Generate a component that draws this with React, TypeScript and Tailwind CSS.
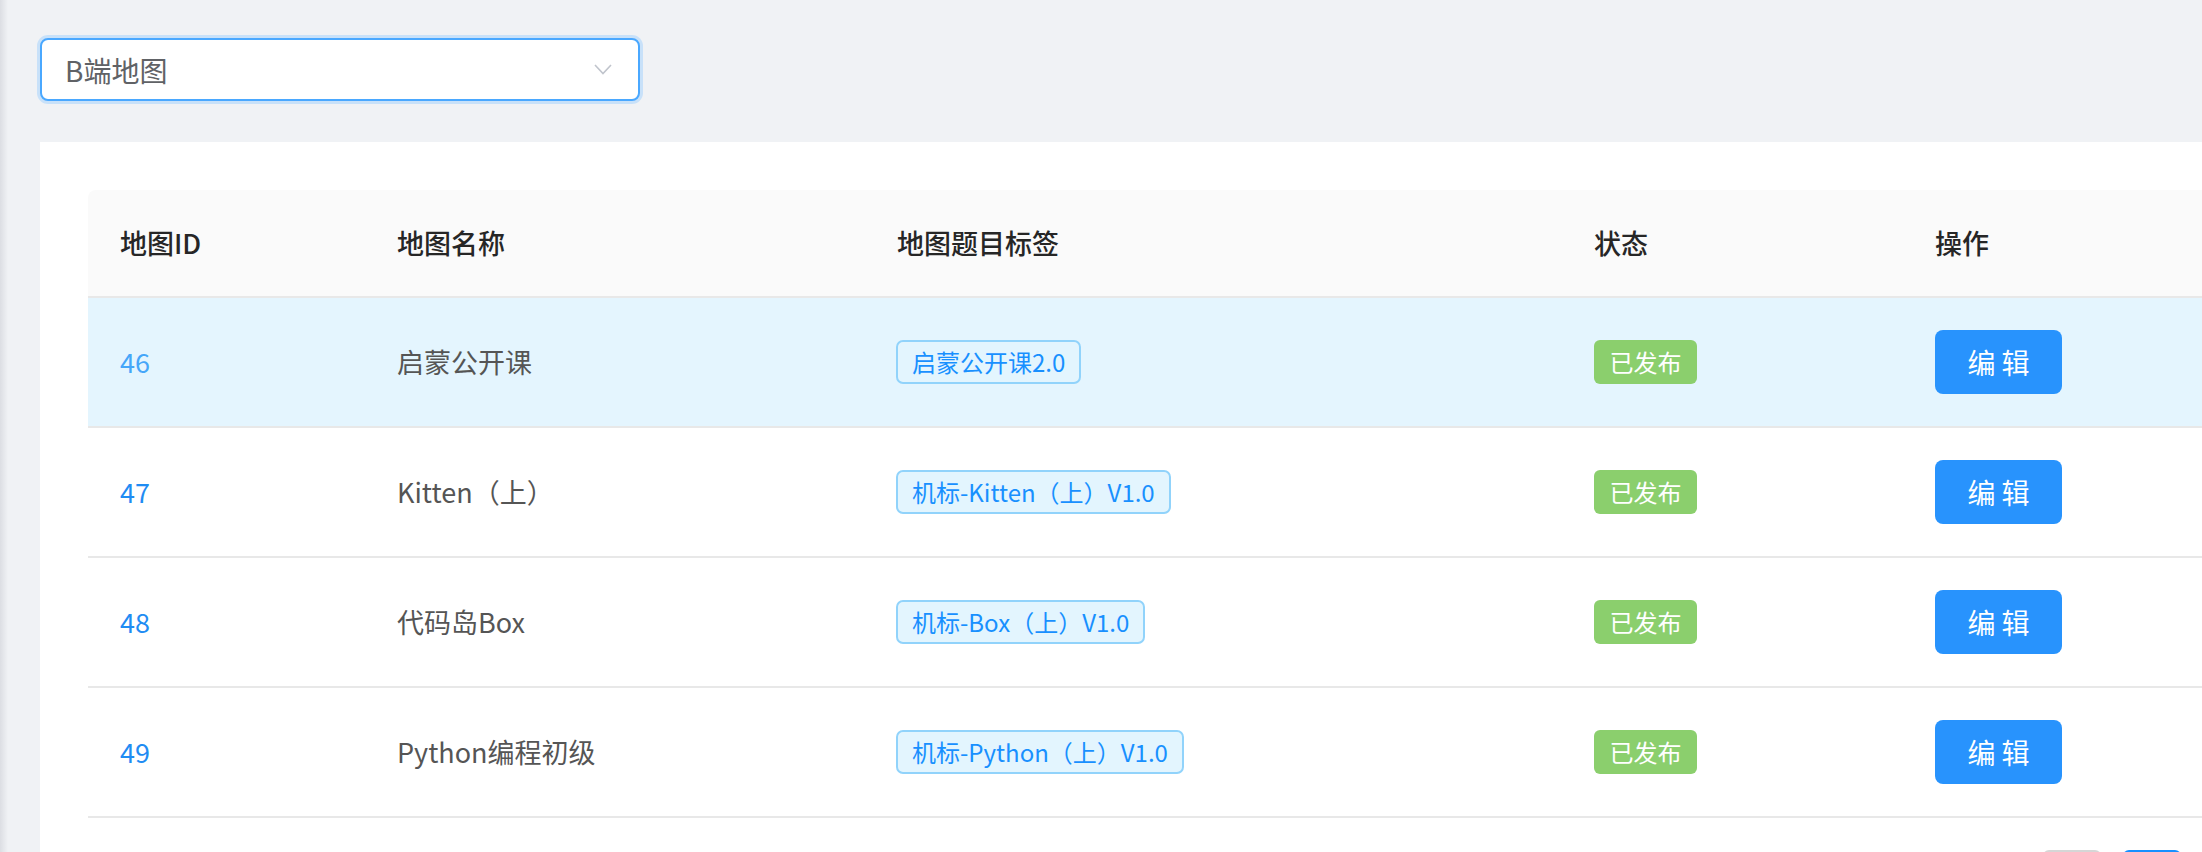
import React from "react";

const rows = [
  { id: "46", name: "启蒙公开课", tag: "启蒙公开课2.0", active: true },
  { id: "47", name: "Kitten（上）", tag: "机标-Kitten（上）V1.0", active: false },
  { id: "48", name: "代码岛Box", tag: "机标-Box（上）V1.0", active: false },
  { id: "49", name: "Python编程初级", tag: "机标-Python（上）V1.0", active: false },
];

const font = { fontFamily: '"Noto Sans CJK SC", "Noto Sans", sans-serif' };

export default function App() {
  return (
    <div className="w-[2202px] h-[852px] overflow-hidden bg-[#f0f2f5] flex" style={font}>
      <div className="w-[8px] h-full shrink-0 bg-gradient-to-r from-[#dcdee3] to-[#f0f2f5]" />
      <div className="flex flex-col pl-[32px] pt-[38px] shrink-0">
        {/* select */}
        <div className="shrink-0 w-[600px] h-[63px] border-2 border-[#4aa8ff] rounded-[8px] bg-white shadow-[0_0_0_3px_#c8e1f9] flex items-center justify-between pl-[23px] pr-[26px]">
          <span className="text-[28px] leading-none text-[#606266]">B端地图</span>
          <svg width="18" height="11" viewBox="0 0 18 11" fill="none">
            <path d="M1 1l8 8.5L17 1" stroke="#c0c4cc" strokeWidth="1.6" />
          </svg>
        </div>

        {/* card */}
        <div className="shrink-0 mt-[41px] w-[2300px] bg-white pt-[48px] px-[48px] pb-[40px]">
          <div className="w-[2215px]">
            {/* header */}
            <div className="flex h-[108px] items-center bg-[#fafafa] border-b-2 border-[#e8e8e8] rounded-tl-[8px] text-[27px] font-medium text-[#262626]">
              <div className="w-[277px] pl-[32px]">地图ID</div>
              <div className="w-[500px] pl-[32px]">地图名称</div>
              <div className="w-[697px] pl-[32px]">地图题目标签</div>
              <div className="w-[341px] pl-[32px]">状态</div>
              <div className="w-[400px] pl-[32px]">操作</div>
            </div>
            {rows.map((r) => (
              <div
                key={r.id}
                className={`flex h-[130px] items-center border-b-2 border-[#e8e8e8] ${r.active ? "bg-[#e4f5fe]" : "bg-white"}`}
              >
                <div className={`w-[277px] pl-[32px] text-[27px] ${r.active ? "text-[#45a6f9]" : "text-[#1f8cf3]"}`}>{r.id}</div>
                <div className="w-[500px] pl-[32px] text-[27px] text-[#555]">{r.name}</div>
                <div className="w-[697px] pl-[31px]">
                  <span className="inline-flex items-center h-[44px] px-[14px] border-2 border-[#91d3fb] bg-[#e3f5fe] rounded-[7px] text-[24px] text-[#1890ff] leading-none">
                    {r.tag}
                  </span>
                </div>
                <div className="w-[341px] pl-[32px]">
                  <span className="inline-flex items-center justify-center w-[103px] h-[44px] bg-[#8bcf6d] rounded-[6px] text-[24px] text-white leading-none">
                    已发布
                  </span>
                </div>
                <div className="w-[400px] pl-[32px]">
                  <button className="w-[127px] h-[64px] bg-[#2893fd] rounded-[8px] text-[28px] text-white leading-none tracking-[6px] pl-[6px]">
                    编辑
                  </button>
                </div>
              </div>
            ))}
            {/* pagination */}
            <div className="flex gap-[22px] pl-[1955px] mt-[32px]">
              <div className="w-[58px] h-[58px] rounded-[6px] border-2 border-[#d6d6d6] bg-white" />
              <div className="w-[58px] h-[58px] rounded-[6px] bg-[#1890ff]" />
            </div>
          </div>
        </div>
      </div>
    </div>
  );
}
